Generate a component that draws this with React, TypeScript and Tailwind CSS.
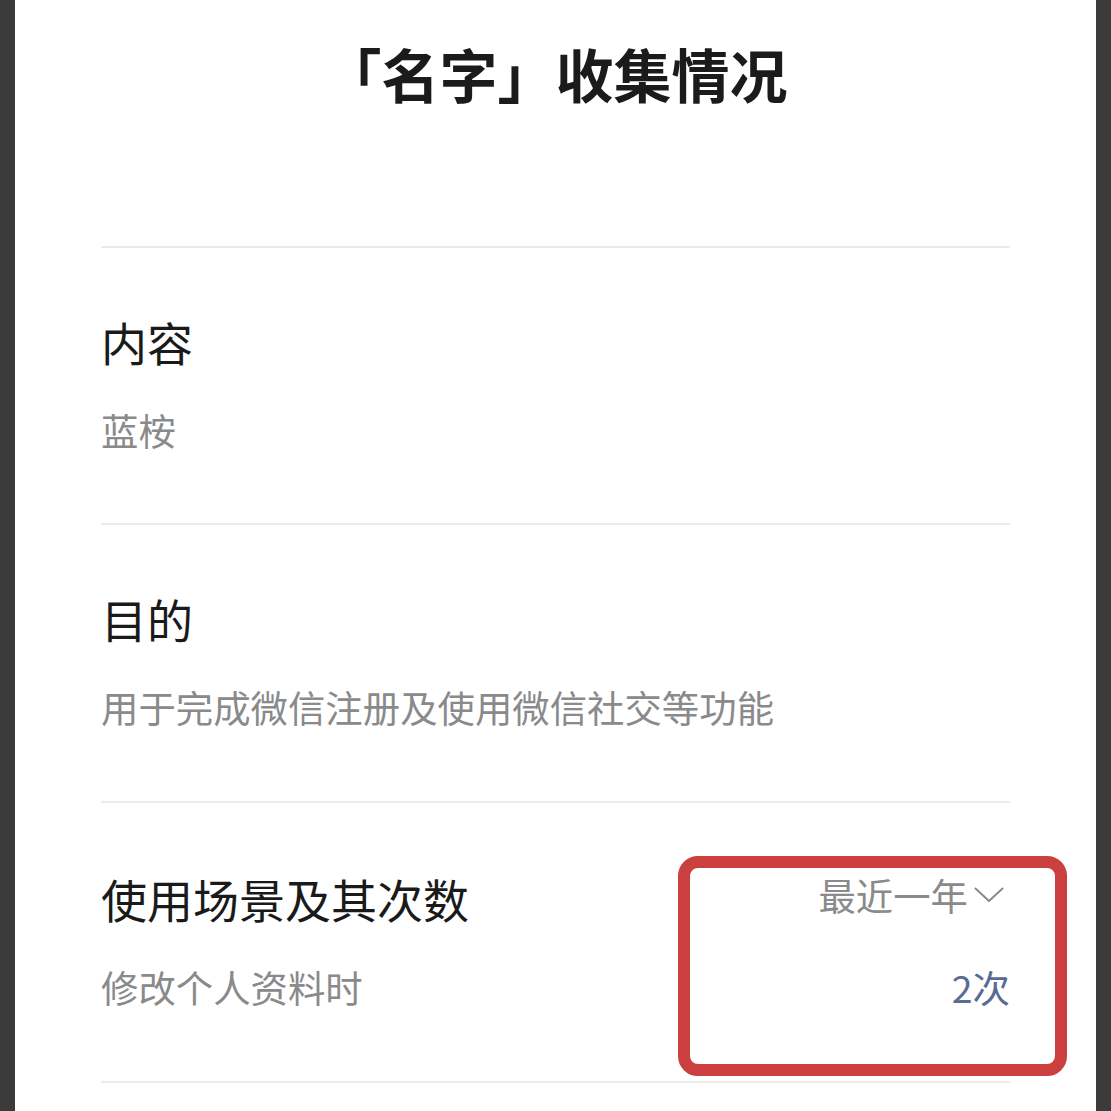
interface Section {
  title: string;
  detail: string;
}

const sections: Section[] = [
  { title: '内容', detail: '蓝桉' },
  { title: '目的', detail: '用于完成微信注册及使用微信社交等功能' },
];

export default function App() {
  return (
    <div
      className="min-h-[1111px] w-[1111px] bg-[#3b3b3b] px-[15px]"
      style={{ fontFamily: '"Noto Sans CJK SC", "Noto Sans", sans-serif' }}
    >
      <div className="min-h-[1111px] bg-white px-[86px]">
        {/* Header */}
        <div className="flex h-[246px] justify-center pt-[37px]">
          <h1 className="text-[58px] font-bold leading-[72px] text-[#1b1b1b]">「名字」收集情况</h1>
        </div>

        {sections.map((s, i) => (
          <div
            key={s.title}
            className={`border-t-2 border-[#ebebeb] pt-[65px] ${i === 0 ? 'pb-[68px]' : 'pb-[69px]'}`}
          >
            <div className="text-[46px] leading-[56px] text-[#1a1a1a]">{s.title}</div>
            <div className="mt-[36px] text-[37.4px] leading-[50px] text-[#8a8a8a]">{s.detail}</div>
          </div>
        ))}

        {/* Usage scenario */}
        <div className="relative border-t-2 border-[#ebebeb] pt-[67px] pb-[69px]">
          <div className="flex items-center justify-between">
            <div className="text-[46px] leading-[56px] text-[#1a1a1a]">使用场景及其次数</div>
            <div className="-mt-[6px] flex items-center gap-[6px] text-[37.4px] leading-[56px] text-[#8a8a8a]">
              <span>最近一年</span>
              <svg width="30" height="16" viewBox="0 0 30 16" fill="none" className="mr-[6px]">
                <polyline points="1.5,1.5 15,14 28.5,1.5" stroke="#8a8a8a" strokeWidth="2" strokeLinecap="round" strokeLinejoin="round" />
              </svg>
            </div>
          </div>
          <div className="mt-[36px] flex items-center justify-between text-[37.4px] leading-[50px]">
            <span className="text-[#8a8a8a]">修改个人资料时</span>
            <span className="text-[#576b95]">2次</span>
          </div>

          {/* annotation box */}
          <div className="absolute left-[577px] top-[53px] h-[220px] w-[389px] rounded-[20px] border-[12px] border-[#cb3f3f]" />
        </div>
        <div className="border-t-2 border-[#ebebeb]" />
      </div>
    </div>
  );
}
